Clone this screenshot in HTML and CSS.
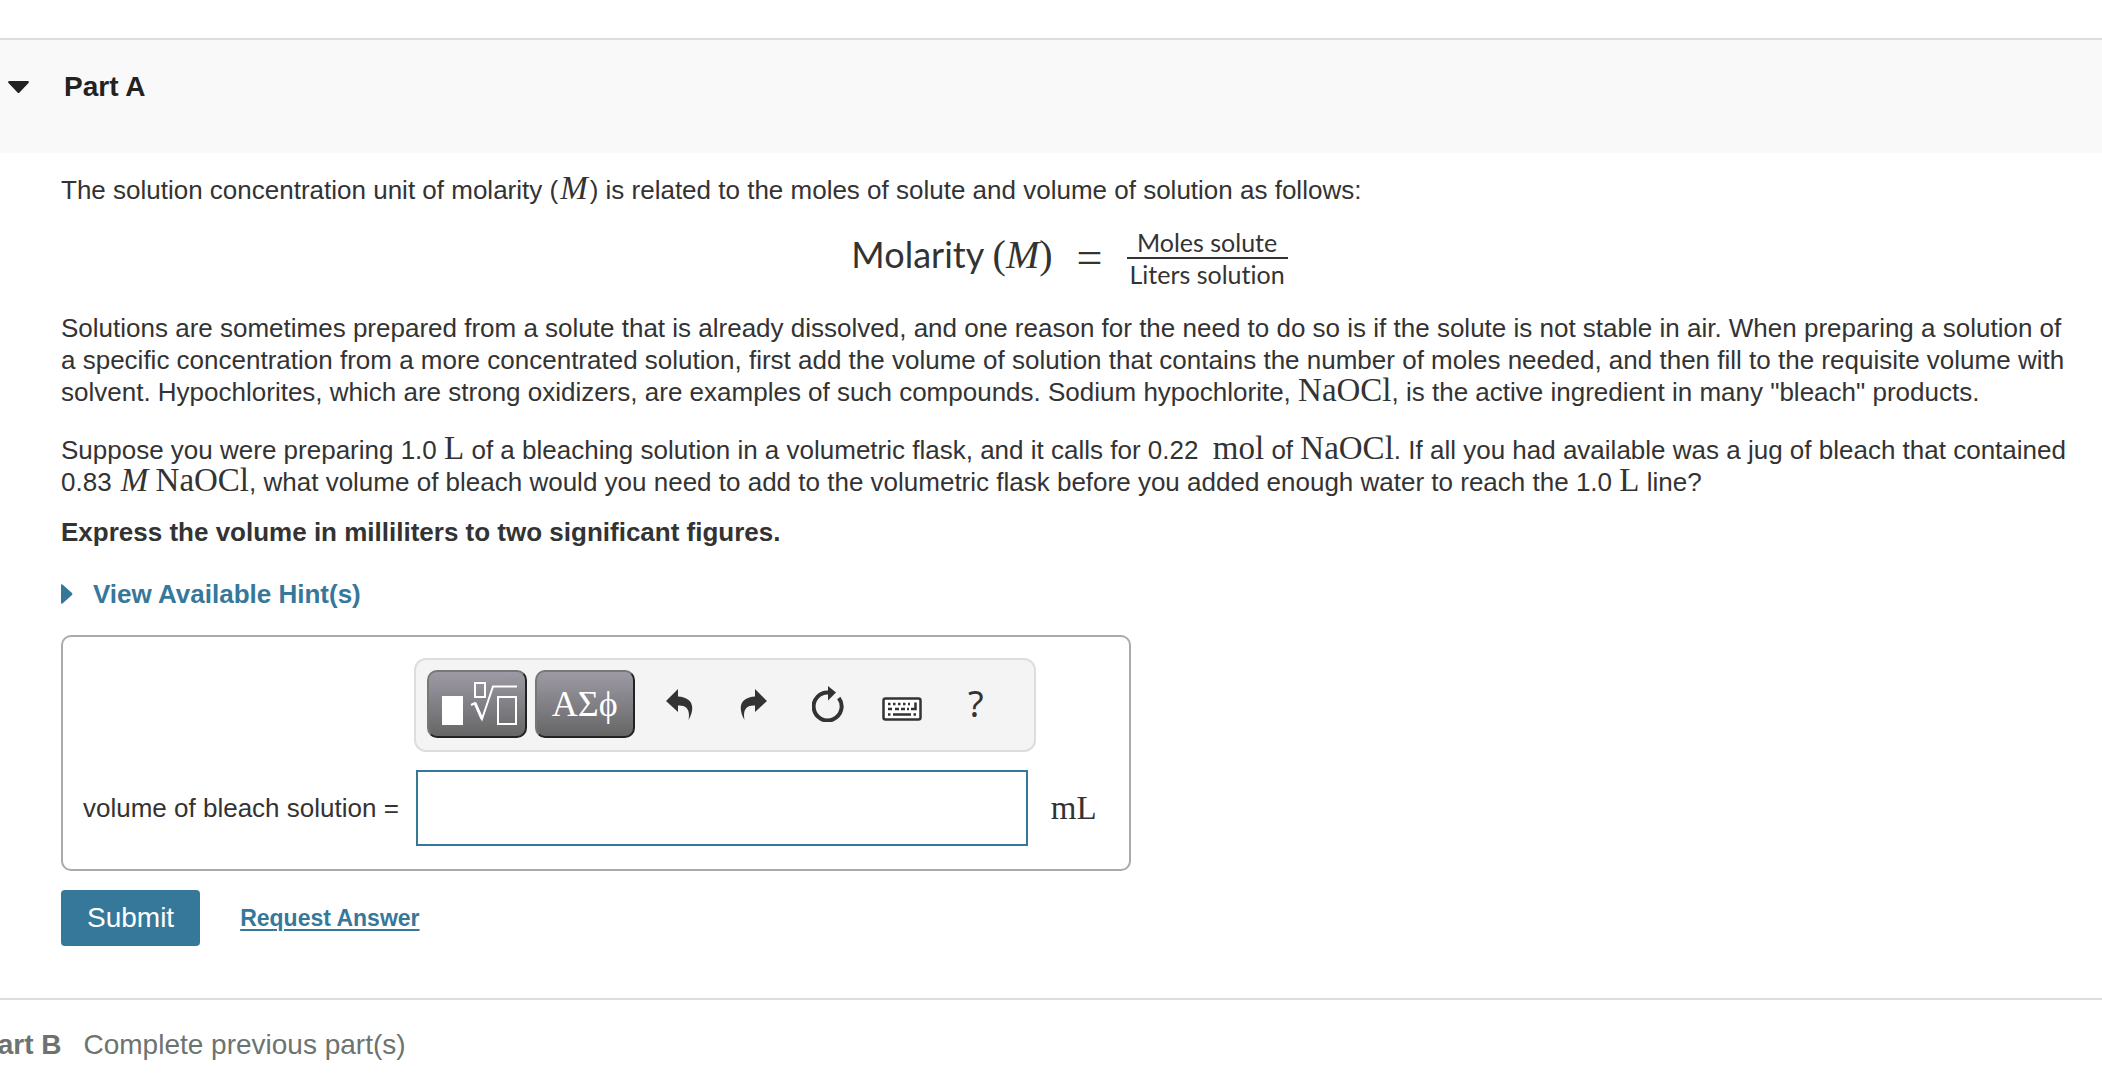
FILE: index.html
```
<!DOCTYPE html>
<html lang="en">
<head>
    <meta charset="UTF-8">
    <meta name="viewport" content="width=device-width, initial-scale=1.0">
    <title>Molarity - Part A</title>
    <link rel="stylesheet" href="styles.css">
</head>
<body>
    <section class="part">
        <header class="part-header">
            <button class="toggle" type="button" aria-label="Collapse Part A">
                <svg width="21" height="12" viewBox="0 0 21 12"><path d="M1 0h19q1.500 .5 .5 2l-9 9.500q-1 1-2 0L.5 2Q-.5.500 1 0z" fill="#222"/></svg>
            </button>
            <h2>Part A</h2>
        </header>

        <div class="part-body">
            <p class="lead">The solution concentration unit of molarity (<i class="math">M</i>) is related to the moles of solute and volume of solution as follows:</p>

            <div class="equation">
                <span class="quantity">Molarity <span class="math-large">(<i>M</i>)</span></span>
                <span class="equals">=</span>
                <span class="fraction">
                    <span class="numerator">Moles solute</span>
                    <span>Liters solution</span>
                </span>
            </div>

            <p>Solutions are sometimes prepared from a solute that is already dissolved, and one reason for the need to do so is if the solute is not stable in air. When preparing a solution of a specific concentration from a more concentrated solution, first add the volume of solution that contains the number of moles needed, and then fill to the requisite volume with solvent. Hypochlorites, which are strong oxidizers, are examples of such compounds. Sodium hypochlorite, <span class="math">NaOCl</span>, is the active ingredient in many "bleach" products.</p>

            <p>Suppose you were preparing 1.0 <span class="math">L</span> of a bleaching solution in a volumetric flask, and it calls for 0.22 &nbsp;<span class="math">mol</span> of <span class="math">NaOCl</span>. If all you had available was a jug of bleach that contained 0.83 <i class="math">M</i>&thinsp;<span class="math">NaOCl</span>, what volume of bleach would you need to add to the volumetric flask before you added enough water to reach the 1.0 <span class="math">L</span> line?</p>

            <p class="instructions">Express the volume in milliliters to two significant figures.</p>

            <button class="hints" type="button">
                <svg width="12" height="20" viewBox="0 0 12 20"><path d="M0 1Q0 0 1.500 .5L11 9q1 1 0 2L1.500 19.500Q0 20 0 19z" fill="currentColor"/></svg>
                View Available Hint(s)
            </button>

            <form>
                <div class="answer-box">
                    <div class="toolbar">
                        <button class="palette" type="button" aria-label="Templates">
                            <svg width="96" height="64" viewBox="0 0 96 64" fill="none" stroke="#fff" stroke-width="2">
                                <path d="M13 24h21v29H13z" fill="#fff" stroke="none"/>
                                <path d="M46 11h10v14H46z"/>
                                <path d="M69 25h18v27H69z"/>
                                <path d="M42 33l4-2 7 16L64 14.500h24"/>
                                <path d="M46 31l7 16" stroke-width="3"/>
                            </svg>
                        </button>
                        <button class="palette" type="button" aria-label="Greek letters">ΑΣϕ</button>
                        <div class="tools">
                            <button type="button" aria-label="Undo">
                                <svg width="27" height="31" viewBox="0 0 27 31" fill="#333"><path d="M0 12L12 0v7.500C24 8 31 16 22.500 31 24.500 20 20 16 12 16.500V23z"/></svg>
                            </button>
                            <button type="button" aria-label="Redo">
                                <svg width="27" height="31" viewBox="0 0 27 31" fill="#333"><path d="M27 12L15 0v7.500C3 8-4 16 4.500 31 2.500 20 7 16 15 16.500V23z"/></svg>
                            </button>
                            <button type="button" aria-label="Reset">
                                <svg width="32" height="36" viewBox="0 0 32 36"><path d="M16 0l8 6.500-8 8z" fill="#333"/><path d="M17 6.500A14 14 0 1 0 26.800 12" fill="none" stroke="#333" stroke-width="4"/></svg>
                            </button>
                            <button type="button" aria-label="Keyboard shortcuts">
                                <svg width="40" height="34" viewBox="0 0 40 34">
                                    <rect x="1.500" y="11.500" width="37" height="21" rx="2" fill="#fff" stroke="#333" stroke-width="2.500"/>
                                    <g fill="none" stroke="#333" stroke-width="2.500">
                                        <path d="M6 17h22" stroke-dasharray="2.500 2.500"/>
                                        <path d="M6 22h4M13 22h14" stroke-dasharray="4 2"/>
                                        <path d="M29 22h4.500v-6.500"/>
                                        <path d="M6 27.500h2.500M11 27.500h18M31.500 27.500H34"/>
                                    </g>
                                </svg>
                            </button>
                            <button type="button" aria-label="Help">?</button>
                        </div>
                    </div>
                    <label for="volume">volume of bleach solution =</label>
                    <input type="text" id="volume">
                    <span class="unit">mL</span>
                </div>

                <div class="actions">
                    <button class="submit" type="submit">Submit</button>
                    <a href="#">Request Answer</a>
                </div>
            </form>
        </div>
    </section>

    <section class="part-locked">
        <h2>Part B</h2>
        <span>Complete previous part(s)</span>
    </section>
</body>
</html>
```
FILE: styles.css
```
:root {
    --text: #333;
    --muted: #6c7370;
    --accent: #36789a;
    --line: #ddd;
}

* {
    box-sizing: border-box;
    margin: 0;
    padding: 0;
}

body {
    color: var(--text);
    font-family: "Liberation Sans", Arial, sans-serif;
    font-size: 26px;
    line-height: 32px;
    padding-top: 38px;
    overflow-x: hidden;
}

button {
    font: inherit;
    color: inherit;
    background: none;
    border: none;
    cursor: pointer;
}

svg {
    display: block;
}

h2 {
    font-size: 28px;
}

p {
    margin-bottom: 26px;
}

.part-header {
    background: #f9f9f9;
    border-top: 2px solid var(--line);
    color: #222;
    display: flex;
    align-items: center;
    gap: 35px;
    padding: 31px 8px 50px;
}

.part-body {
    padding: 21px 24px 52px 61px;
}

.math {
    font-family: "Liberation Serif", serif;
    font-size: 33px;
    line-height: 24px;
}

i.math {
    padding: 0 2px;
}

.lead {
    margin-bottom: 21px;
}

.equation {
    display: flex;
    justify-content: center;
    align-items: center;
    gap: 24px;
    margin-bottom: 23px;
    font-family: Lato, sans-serif;
    font-variant-ligatures: none;
}

.quantity {
    font-size: 36px;
    padding-bottom: 8px;
}

.math-large {
    font-family: "Liberation Serif", serif;
    font-size: 40px;
}

.equals {
    font-family: "Liberation Serif", serif;
    font-size: 46px;
}

.fraction {
    display: grid;
    font-size: 25px;
    line-height: 30px;
    text-align: center;
}

.fraction span {
    padding: 0 3px;
}

.numerator {
    border-bottom: 2px solid var(--text);
}

.instructions {
    margin: -8px 0 30px;
    font-weight: bold;
}

.hints {
    display: flex;
    align-items: center;
    gap: 20px;
    margin-bottom: 25px;
    color: var(--accent);
    font-weight: bold;
}

.answer-box {
    display: grid;
    grid-template-columns: auto auto auto;
    align-items: center;
    gap: 18px 15px;
    width: fit-content;
    padding: 21px 32px 23px 20px;
    border: 2px solid #aaa;
    border-radius: 10px;
}

.toolbar {
    grid-column: 2;
    display: flex;
    gap: 8px;
    padding: 10px 21px 12px 11px;
    background: #f4f4f4;
    border: 2px solid var(--line);
    border-radius: 12px;
}

.palette {
    width: 100px;
    height: 68px;
    border: 2px solid;
    border-color: #777 #222 #222 #777;
    border-radius: 10px;
    background: linear-gradient(#9d9aa5, #666);
    color: #fff;
    font-family: "Liberation Serif", serif;
    font-size: 36px;
}

.tools {
    display: flex;
}

.tools button {
    display: flex;
    align-items: center;
    justify-content: center;
    width: 74px;
    font-family: "Noto Sans", sans-serif;
    font-size: 36px;
}

.answer-box label {
    grid-column: 1;
}

.answer-box input {
    height: 76px;
    margin: 0 8px 0 2px;
    padding: 0 12px;
    border: 2px solid var(--accent);
    font: inherit;
}

.unit {
    font-family: "Liberation Serif", serif;
    font-size: 33px;
}

.actions {
    display: flex;
    align-items: center;
    gap: 40px;
    margin-top: 19px;
}

.submit {
    height: 56px;
    padding: 0 26px;
    background: var(--accent);
    border-radius: 4px;
    color: #fff;
    font-size: 28px;
}

.actions a {
    color: var(--accent);
    font-size: 23px;
    font-weight: bold;
    text-underline-offset: 3px;
}

/* the heading runs off the left edge of the panel */
.part-locked {
    display: flex;
    gap: 22px;
    margin-left: -21px;
    padding: 29px 0 16px;
    border-top: 2px solid var(--line);
    color: var(--muted);
    font-size: 28px;
}
```
